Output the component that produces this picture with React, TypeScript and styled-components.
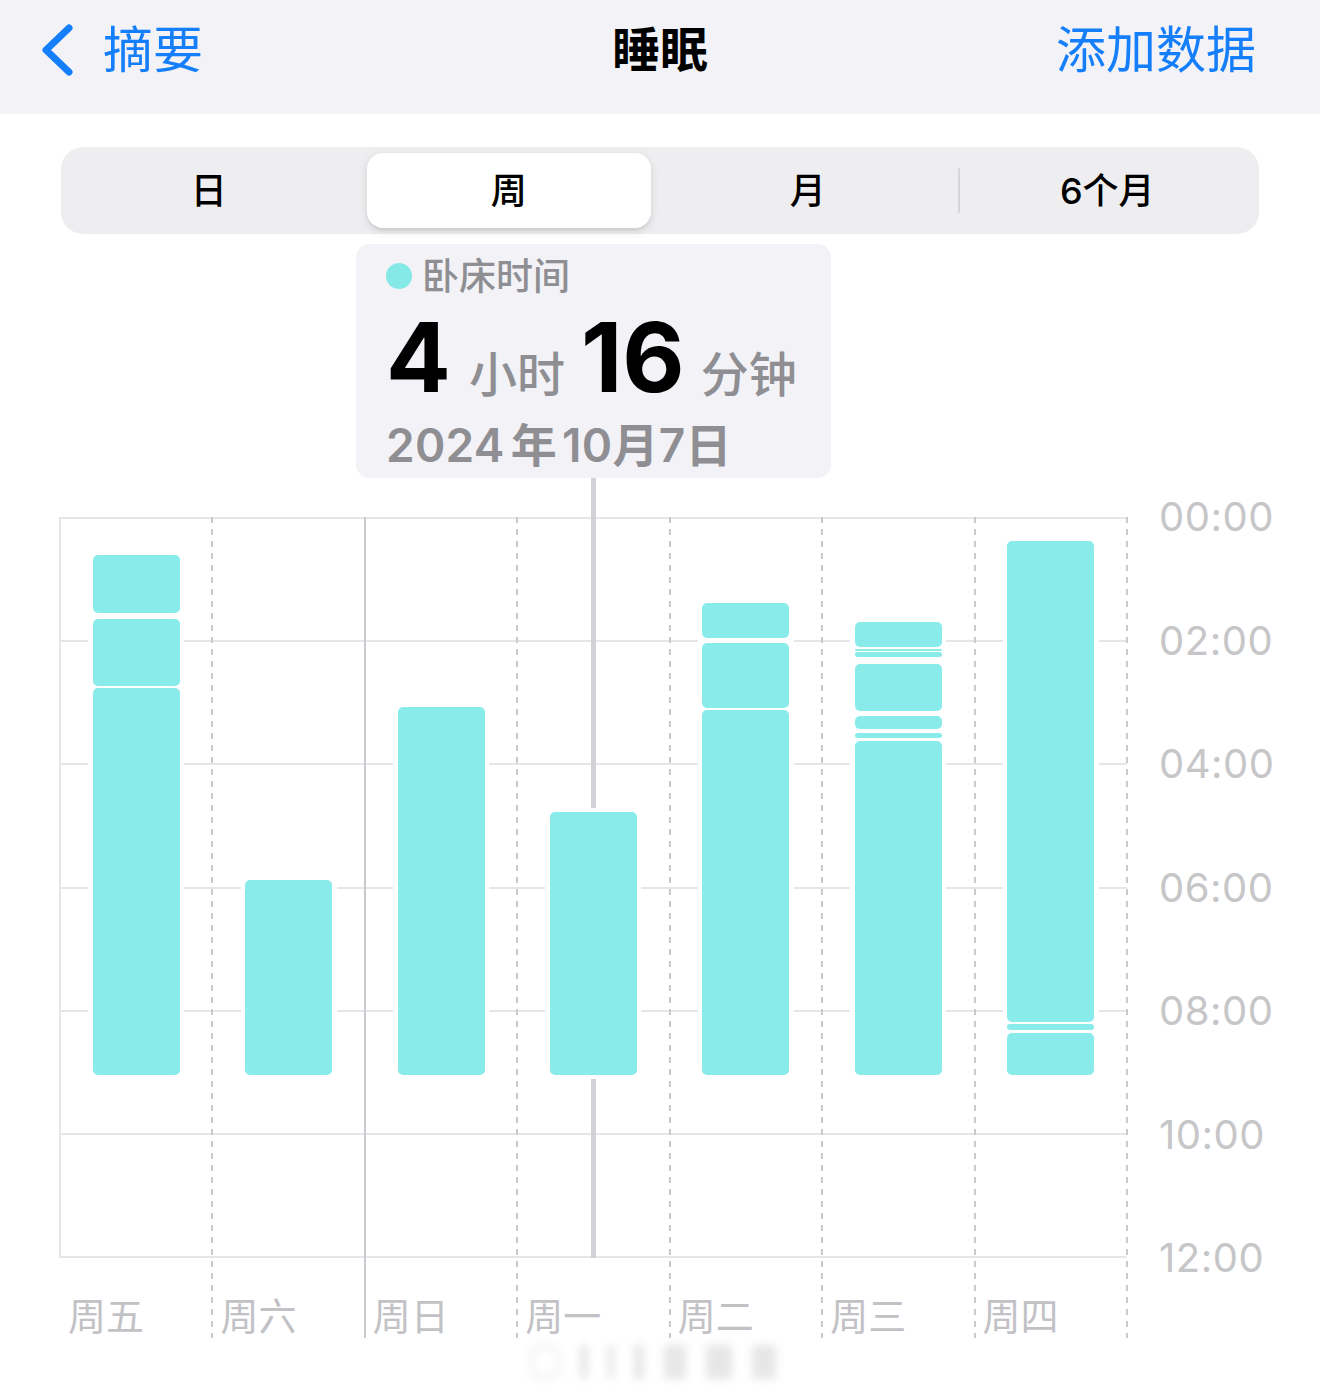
import React from "react";
import styled, { createGlobalStyle } from "styled-components";

const GlobalStyle = createGlobalStyle`
  html, body { margin: 0; padding: 0; background: #ffffff; }
  body {
    font-family: Inter, "Noto Sans CJK SC", sans-serif;
    -webkit-font-smoothing: antialiased;
  }
`;

const BLUE = "#157efb";
const BAR = "#8aecea";
const GRID = "#e6e6ea";
const VLINE = "#c9c9ce";

const Page = styled.div`
  width: 1320px;
  min-height: 1394px;
  background: #fff;
  overflow: hidden;
`;

const Header = styled.header`
  height: 114px;
  box-sizing: border-box;
  padding: 0 40px 14px 40px;
  background: #f2f2f7;
  display: grid;
  grid-template-columns: 1fr auto 1fr;
  align-items: center;
`;

const BackButton = styled.div`
  display: flex;
  align-items: center;
  gap: 29px;
  color: ${BLUE};
  font-size: 50px;
  line-height: 1;
`;

const Title = styled.h1`
  margin: 0;
  font-size: 48px;
  font-weight: 700;
  line-height: 1;
  color: #000;
`;

const Action = styled.div`
  justify-self: end;
  padding-right: 24px;
  color: ${BLUE};
  font-size: 50px;
  line-height: 1;
`;

const Segmented = styled.div`
  margin: 33px 61px 0;
  height: 87px;
  box-sizing: border-box;
  padding: 6px 0;
  background: #eeeef0;
  border-radius: 22px;
  display: grid;
  grid-template-columns: repeat(4, 1fr);
`;

const Segment = styled.div<{ $active?: boolean; $divider?: boolean }>`
  position: relative;
  display: flex;
  align-items: center;
  justify-content: center;
  padding-right: ${(p) => (p.$active ? "0" : "4px")};
  margin: ${(p) => (p.$active ? "0 9px 0 6px" : "0")};
  font-size: 36px;
  font-weight: 500;
  line-height: 1;
  color: #000;
  border-radius: 16px;
  background: ${(p) => (p.$active ? "#fff" : "transparent")};
  box-shadow: ${(p) =>
    p.$active ? "0 3px 8px rgba(0,0,0,0.12), 0 3px 1px rgba(0,0,0,0.04)" : "none"};
  &::before {
    content: "";
    display: ${(p) => (p.$divider ? "block" : "none")};
    position: absolute;
    left: -2px;
    top: 15px;
    bottom: 15px;
    width: 2px;
    background: #d6d6da;
    border-radius: 1px;
  }
`;

const ChartSection = styled.section`
  padding-top: 10px;
`;

const Tooltip = styled.div`
  margin-left: 356px;
  width: 475px;
  height: 234px;
  box-sizing: border-box;
  background: #f2f2f7;
  border-radius: 14px;
  padding: 13px 0 0 30px;
`;

const TooltipLabel = styled.div`
  display: flex;
  align-items: center;
  gap: 10px;
  height: 38px;
  font-size: 37px;
  font-weight: 500;
  color: #8e8e93;
  line-height: 1;
`;

const Dot = styled.span`
  width: 26px;
  height: 26px;
  border-radius: 50%;
  background: #84e9e7;
`;

const ValueRow = styled.div`
  margin-top: 14px;
  display: flex;
  align-items: baseline;
  line-height: 1;
`;

const BigNumber = styled.span`
  font-size: 96px;
  font-weight: 700;
  color: #000;
  letter-spacing: 0;
`;

const Unit = styled.span<{ $last?: boolean }>`
  font-size: 48px;
  font-weight: 500;
  color: #8e8e93;
  margin: ${(p) => (p.$last ? "0 0 0 16px" : "0 16px 0 18px")};
`;

const DateRow = styled.div`
  margin-top: 17px;
  font-size: 46px;
  font-weight: 600;
  line-height: 1;
  color: #8e8e93;
  letter-spacing: 0.3px;
`;

const DateUnit = styled.span`
  margin: 0 5px 0 6px;
`;

const Chart = styled.div`
  margin-top: 39px;
  display: flex;
`;

const Plot = styled.div`
  position: relative;
  margin-left: 60px;
  width: 1067px;
  display: grid;
  grid-template-columns: repeat(7, 1fr);
`;

const GridLayer = styled.div`
  position: absolute;
  left: -1px;
  right: 0;
  top: 0;
  height: 741px;
  box-sizing: border-box;
  display: flex;
  flex-direction: column;
  border-left: 2px solid ${GRID};
  border-bottom: 2px solid ${GRID};
`;

const GridRow = styled.div`
  flex: 1;
  border-top: 2px solid ${GRID};
`;

const SelectionLine = styled.div`
  position: absolute;
  left: 531px;
  top: -39px;
  width: 5px;
  height: 780px;
  background: #d1d1d6;
`;

type LineKind = "none" | "dashed" | "solid";

const Column = styled.div<{ $line: LineKind; $last?: boolean }>`
  position: relative;
  display: flex;
  flex-direction: column;
  &::before {
    content: "";
    display: ${(p) => (p.$line === "none" ? "none" : "block")};
    position: absolute;
    left: -1px;
    top: 0;
    bottom: 0;
    width: 2px;
    background: ${(p) =>
      p.$line === "solid"
        ? VLINE
        : `repeating-linear-gradient(to bottom, ${VLINE} 0 6px, transparent 6px 12px)`};
  }
  &::after {
    content: "";
    display: ${(p) => (p.$last ? "block" : "none")};
    position: absolute;
    right: -1px;
    top: 0;
    bottom: 0;
    width: 2px;
    background: repeating-linear-gradient(to bottom, ${VLINE} 0 6px, transparent 6px 12px);
  }
`;

const BarTrack = styled.div`
  position: relative;
  height: 741px;
`;

const Halo = styled.div`
  position: absolute;
  left: calc(50% - 48px);
  width: 96px;
  background: #fff;
  border-radius: 8px;
`;

const Bar = styled.div`
  position: absolute;
  left: calc(50% - 43.5px);
  width: 87px;
  background: ${BAR};
`;

const DayLabel = styled.div`
  height: 80px;
  box-sizing: border-box;
  padding: 39px 0 0 8px;
  font-size: 38px;
  line-height: 1;
  color: #c2c2c6;
`;

const Axis = styled.div`
  margin-left: 32px;
  height: 741px;
  display: flex;
  flex-direction: column;
  justify-content: space-between;
`;

const Tick = styled.div`
  height: 0;
  display: flex;
  align-items: center;
  font-family: Inter, "Liberation Sans", sans-serif;
  font-size: 40px;
  line-height: 1;
  color: #c6c6c8;
  letter-spacing: 0.5px;
`;

const Watermark = styled.div`
  margin: 4px 0 0 530px;
  height: 40px;
  display: flex;
  align-items: center;
  gap: 20px;
  filter: blur(4px);
  opacity: 0.35;
`;

const Blot = styled.div<{ $w: number; $round?: boolean }>`
  width: ${(p) => p.$w}px;
  height: 34px;
  border-radius: ${(p) => (p.$round ? "12px" : "2px")};
  background: ${(p) => (p.$round ? "transparent" : "#b9b9bd")};
  border: ${(p) => (p.$round ? "3px solid #c9c9cc" : "none")};
  box-sizing: border-box;
`;

type Seg = [number, number];
interface Day {
  label: string;
  line: LineKind;
  segs: Seg[];
}

const days: Day[] = [
  { label: "周五", line: "none", segs: [[38, 96], [102, 169], [171, 558]] },
  { label: "周六", line: "dashed", segs: [[363, 558]] },
  { label: "周日", line: "solid", segs: [[190, 558]] },
  { label: "周一", line: "dashed", segs: [[295, 558]] },
  { label: "周二", line: "dashed", segs: [[86, 121], [126, 191], [193, 558]] },
  {
    label: "周三",
    line: "dashed",
    segs: [[105, 130], [132, 134], [135, 140], [147, 194], [199, 212], [216, 221], [224, 558]],
  },
  { label: "周四", line: "dashed", segs: [[24, 505], [507, 513], [516, 558]] },
];

const ticks = ["00:00", "02:00", "04:00", "06:00", "08:00", "10:00", "12:00"];

function Chevron() {
  return (
    <svg width="34" height="52" viewBox="0 0 34 52" aria-hidden>
      <path
        d="M29 4 L6 26 L29 48"
        fill="none"
        stroke={BLUE}
        strokeWidth="7"
        strokeLinecap="round"
        strokeLinejoin="round"
      />
    </svg>
  );
}

export default function App() {
  return (
    <Page>
      <GlobalStyle />
      <Header>
        <BackButton>
          <Chevron />
          <span>摘要</span>
        </BackButton>
        <Title>睡眠</Title>
        <Action>添加数据</Action>
      </Header>

      <Segmented>
        <Segment>日</Segment>
        <Segment $active>周</Segment>
        <Segment>月</Segment>
        <Segment $divider>6个月</Segment>
      </Segmented>

      <ChartSection>
        <Tooltip>
          <TooltipLabel>
            <Dot />
            <span>卧床时间</span>
          </TooltipLabel>
          <ValueRow>
            <BigNumber>4</BigNumber>
            <Unit>小时</Unit>
            <BigNumber>16</BigNumber>
            <Unit $last>分钟</Unit>
          </ValueRow>
          <DateRow>
            2024<DateUnit>年</DateUnit>10月7日
          </DateRow>
        </Tooltip>

        <Chart>
          <Plot>
            <GridLayer>
              {[0, 1, 2, 3, 4, 5].map((i) => (
                <GridRow key={i} />
              ))}
            </GridLayer>
            <SelectionLine />
            {days.map((d, i) => {
              const top = d.segs[0][0];
              const bottom = d.segs[d.segs.length - 1][1];
              return (
                <Column key={d.label} $line={d.line} $last={i === days.length - 1}>
                  <BarTrack>
                    <Halo style={{ top: top - 4, height: bottom - top + 8 }} />
                    {d.segs.map(([a, b], j) => (
                      <Bar
                        key={j}
                        style={{
                          top: a,
                          height: b - a,
                          borderRadius: Math.min(5, (b - a) / 2),
                        }}
                      />
                    ))}
                  </BarTrack>
                  <DayLabel>{d.label}</DayLabel>
                </Column>
              );
            })}
          </Plot>
          <Axis>
            {ticks.map((t) => (
              <Tick key={t}>{t}</Tick>
            ))}
          </Axis>
        </Chart>

        <Watermark>
          <Blot $w={30} $round />
          <Blot $w={8} />
          <Blot $w={6} />
          <Blot $w={10} />
          <Blot $w={22} />
          <Blot $w={26} />
          <Blot $w={24} />
        </Watermark>
      </ChartSection>
    </Page>
  );
}
